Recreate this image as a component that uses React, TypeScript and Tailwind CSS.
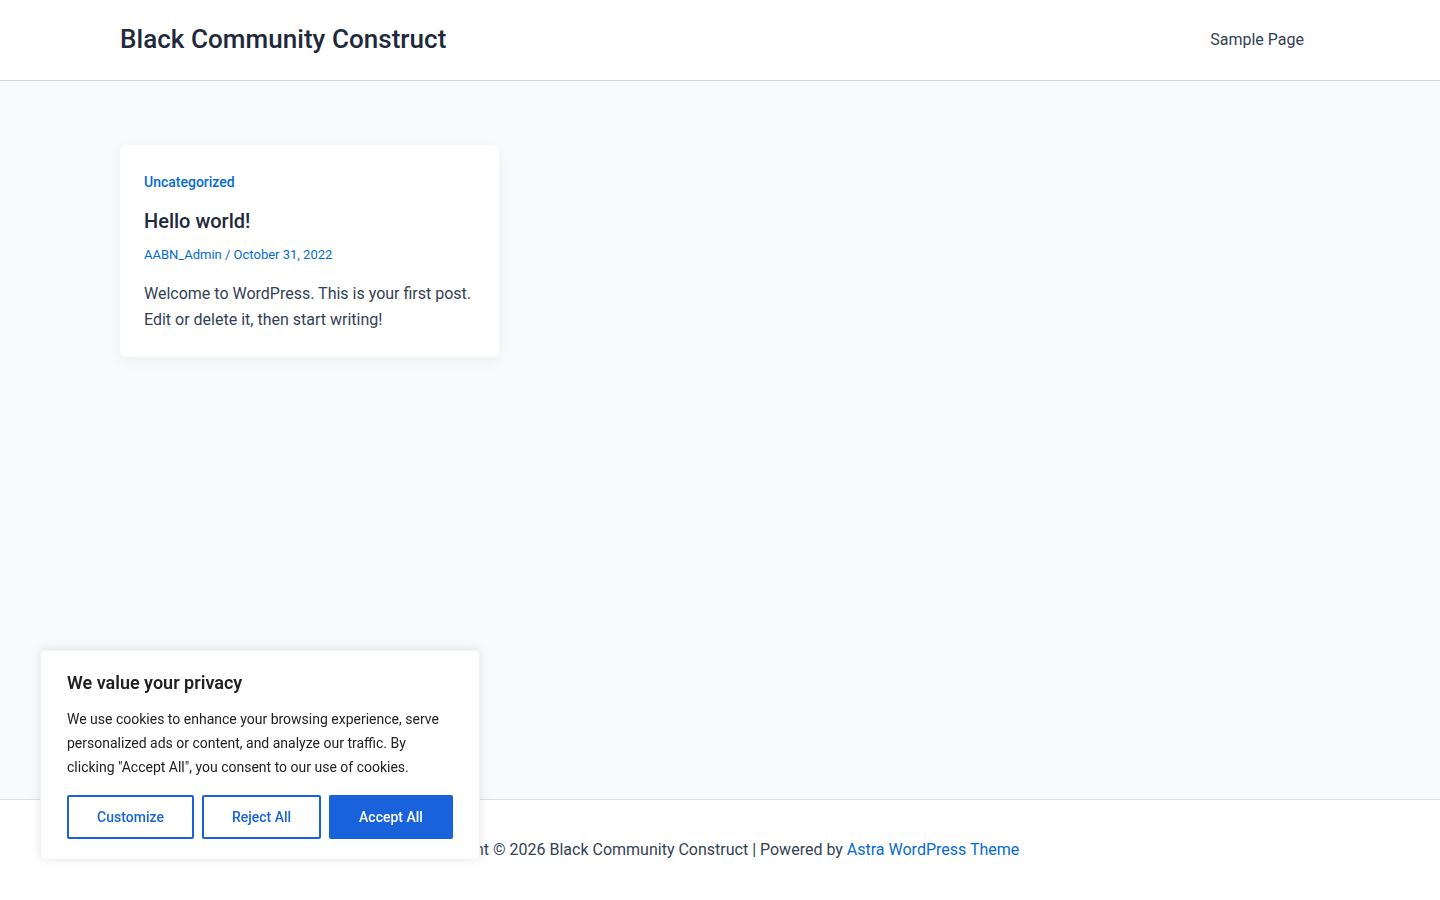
import React from 'react';

const Header = () => (
    <header className="h-[81px] bg-white border-b border-[#d4d8de]">
        <div className="max-w-[1200px] mx-auto h-full flex items-center justify-between">
            <a href="#" className="mb-[2px] text-[26px] leading-[32px] font-medium text-[#1e293b] tracking-[0.05px]">
                Black Community Construct
            </a>
            <nav>
                <a href="#" className="px-4 text-[16px] text-[#334155]">Sample Page</a>
            </nav>
        </div>
    </header>
);

const PostCard = () => (
    <article className="w-[379px] bg-white rounded-[6px] p-6 shadow-[0_4px_16px_rgba(15,23,42,0.05)]">
        <a href="#" className="block text-[14px] leading-[26px] font-medium text-[#046bd2]">Uncategorized</a>
        <h2 className="mt-[11px] text-[20px] leading-[30px] font-medium text-[#1e293b]">Hello world!</h2>
        <div className="mt-[9px] text-[13px] leading-[20px] text-[#046bd2]">
            <a href="#">AABN_Admin</a> / <span>October 31, 2022</span>
        </div>
        <p className="mt-4 text-[16px] leading-[26px] text-[#334155]">
            Welcome to WordPress. This is your first post. Edit or delete it, then start writing!
        </p>
    </article>
);

const CookieBanner = () => (
    <div className="fixed left-[40px] bottom-[40px] w-[440px] bg-white rounded-[4px] border border-[#f1f1f1] shadow-[0_-1px_10px_rgba(172,171,171,0.3)] px-[26px] pt-[20px] pb-[20px] text-[#212121]">
        <p className="text-[18px] leading-[24px] font-semibold">We value your privacy</p>
        <p className="mt-3 text-[14px] leading-[24px]">
            We use cookies to enhance your browsing experience, serve personalized ads or content, and analyze our traffic. By clicking "Accept All", you consent to our use of cookies.
        </p>
        <div className="mt-4 flex gap-2">
            <button className="w-[127px] h-[44px] border-2 border-[#1863dc] rounded-[2px] text-[14px] font-medium text-[#1863dc]">Customize</button>
            <button className="w-[119px] h-[44px] border-2 border-[#1863dc] rounded-[2px] text-[14px] font-medium text-[#1863dc]">Reject All</button>
            <button className="w-[124px] h-[44px] bg-[#1863dc] border-2 border-[#1863dc] rounded-[2px] text-[14px] font-medium text-white">Accept All</button>
        </div>
    </div>
);

export default function App() {
    return (
        <div className="min-h-screen flex flex-col bg-[#f9fafb]" style={{ fontFamily: 'Roboto, "Liberation Sans", sans-serif' }}>
            <Header />
            <main className="flex-1">
                <div className="max-w-[1200px] mx-auto pt-16">
                    <PostCard />
                </div>
            </main>
            <footer className="h-[101px] bg-white border-t border-[#dde1e6] flex items-center justify-center">
                <p className="text-[16px] leading-[26px] text-[#334155]">
                    Copyright © 2026 Black Community Construct | Powered by{' '}
                    <a href="#" className="text-[#046bd2]">Astra WordPress Theme</a>
                </p>
            </footer>
            <CookieBanner />
        </div>
    );
}
